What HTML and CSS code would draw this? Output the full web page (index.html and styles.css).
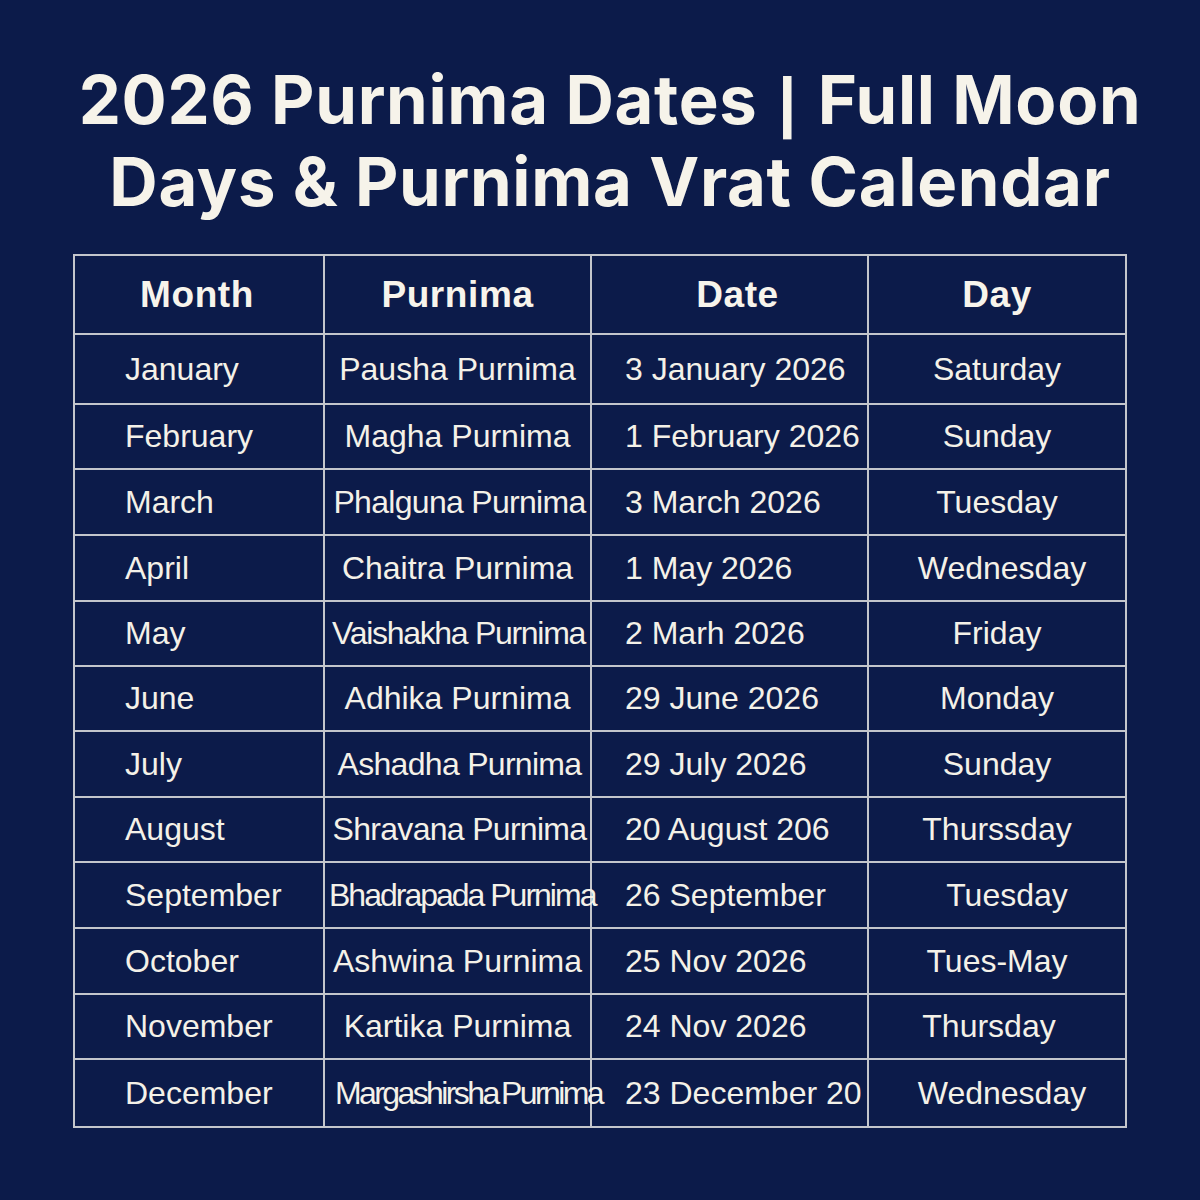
FILE: index.html
```html
<!DOCTYPE html>
<html lang="en">
<head>
<meta charset="utf-8">
<title>2026 Purnima Dates</title>
<link rel="stylesheet" href="styles.css">
</head>
<body>
<main class="page">
  <h1 class="title">2026 Purnima Dates <span class="bar">|</span> Full Moon<br>Days &amp; Purnima Vrat Calendar</h1>
  <table class="cal">
    <colgroup>
      <col class="c-month"><col class="c-purnima"><col class="c-date"><col class="c-day">
    </colgroup>
    <thead>
      <tr class="r-head">
        <th class="month">Month</th><th>Purnima</th><th class="date-h">Date</th><th>Day</th>
      </tr>
    </thead>
    <tbody>
      <tr class="r1"><td class="month">January</td><td>Pausha Purnima</td><td class="date">3 January 2026</td><td>Saturday</td></tr>
      <tr class="r2"><td class="month">February</td><td>Magha Purnima</td><td class="date">1 February 2026</td><td>Sunday</td></tr>
      <tr class="r3"><td class="month">March</td><td class="snug">Phalguna Purnima</td><td class="date">3 March 2026</td><td>Tuesday</td></tr>
      <tr class="r3"><td class="month">April</td><td>Chaitra Purnima</td><td class="date">1 May 2026</td><td class="wed">Wednesday</td></tr>
      <tr class="r2"><td class="month">May</td><td class="snugger">Vaishakha Purnima</td><td class="date">2 Marh 2026</td><td>Friday</td></tr>
      <tr class="r2"><td class="month">June</td><td>Adhika Purnima</td><td class="date">29 June 2026</td><td>Monday</td></tr>
      <tr class="r3"><td class="month">July</td><td class="snug">Ashadha Purnima</td><td class="date">29 July 2026</td><td>Sunday</td></tr>
      <tr class="r2"><td class="month">August</td><td class="snug">Shravana Purnima</td><td class="date">20 August 206</td><td>Thurssday</td></tr>
      <tr class="r3"><td class="month">September</td><td class="tight">Bhadrapada Purnima</td><td class="date">26 September</td><td class="shift">Tuesday</td></tr>
      <tr class="r3"><td class="month">October</td><td>Ashwina Purnima</td><td class="date">25 Nov 2026</td><td>Tues-May</td></tr>
      <tr class="r2"><td class="month">November</td><td>Kartika Purnima</td><td class="date">24 Nov 2026</td><td class="thu">Thursday</td></tr>
      <tr class="r4"><td class="month">December</td><td class="tighter">Margashirsha Purnima</td><td class="date">23 December 20</td><td class="wed">Wednesday</td></tr>
    </tbody>
  </table>
</main>
</body>
</html>
```
FILE: styles.css
```css
html, body {
  margin: 0;
  padding: 0;
  background: #0c1b4a;
}

.page {
  width: 1200px;
  height: 1200px;
  padding-top: 59px;
  box-sizing: border-box;
  background: #0c1b4a;
  font-family: "Liberation Sans", Arial, sans-serif;
  color: #f4f1e8;
}

.title {
  margin: 0 0 31px 0;
  font-family: Inter, "Liberation Sans", Arial, sans-serif;
  font-size: 67px;
  line-height: 82px;
  font-weight: 700;
  letter-spacing: 0.7px;
  text-align: center;
  color: #f6f3ea;
  padding-left: 20px;
}

.title .bar {
  font-family: "Liberation Sans", Arial, sans-serif;
  font-size: 66px;
  line-height: 0;
  padding: 0 4px;
}

.cal {
  margin: 0 auto;
  width: 1052px;
  border-collapse: collapse;
  table-layout: fixed;
  font-size: 32px;
  color: #f4f1e8;
}

.c-month { width: 250px; }
.c-purnima { width: 267px; }
.c-date { width: 277px; }
.c-day { width: 258px; }

.cal th,
.cal td {
  border: 2px solid #c4c6cc;
  padding: 0;
  text-align: center;
  vertical-align: middle;
  white-space: nowrap;
  overflow: visible;
}

.cal th {
  font-size: 37px;
  font-weight: 700;
  letter-spacing: 0.6px;
  color: #f7f4ec;
}

.cal th.month {
  padding-right: 4px;
}

.cal th.date-h {
  padding-left: 16px;
}

.cal td.month {
  text-align: left;
  padding-left: 50px;
}

.cal td.date {
  text-align: left;
  padding-left: 33px;
}

.cal td.snug {
  letter-spacing: -0.7px;
  padding-left: 4px;
}

.cal td.snugger {
  letter-spacing: -1.3px;
  padding-left: 2px;
}

.cal td.tight {
  letter-spacing: -2px;
  padding-left: 4px;
}

.cal td.tighter {
  letter-spacing: -2.6px;
  word-spacing: -3px;
  padding-left: 10px;
}

.cal td.wed { padding-left: 10px; }
.cal td.shift { padding-left: 20px; }
.cal td.thu { padding-left: 0; padding-right: 16px; }

.r-head { height: 79px; }
.r1 { height: 70px; }
.r2 { height: 65px; }
.r3 { height: 66px; }
.r4 { height: 68px; }
```
